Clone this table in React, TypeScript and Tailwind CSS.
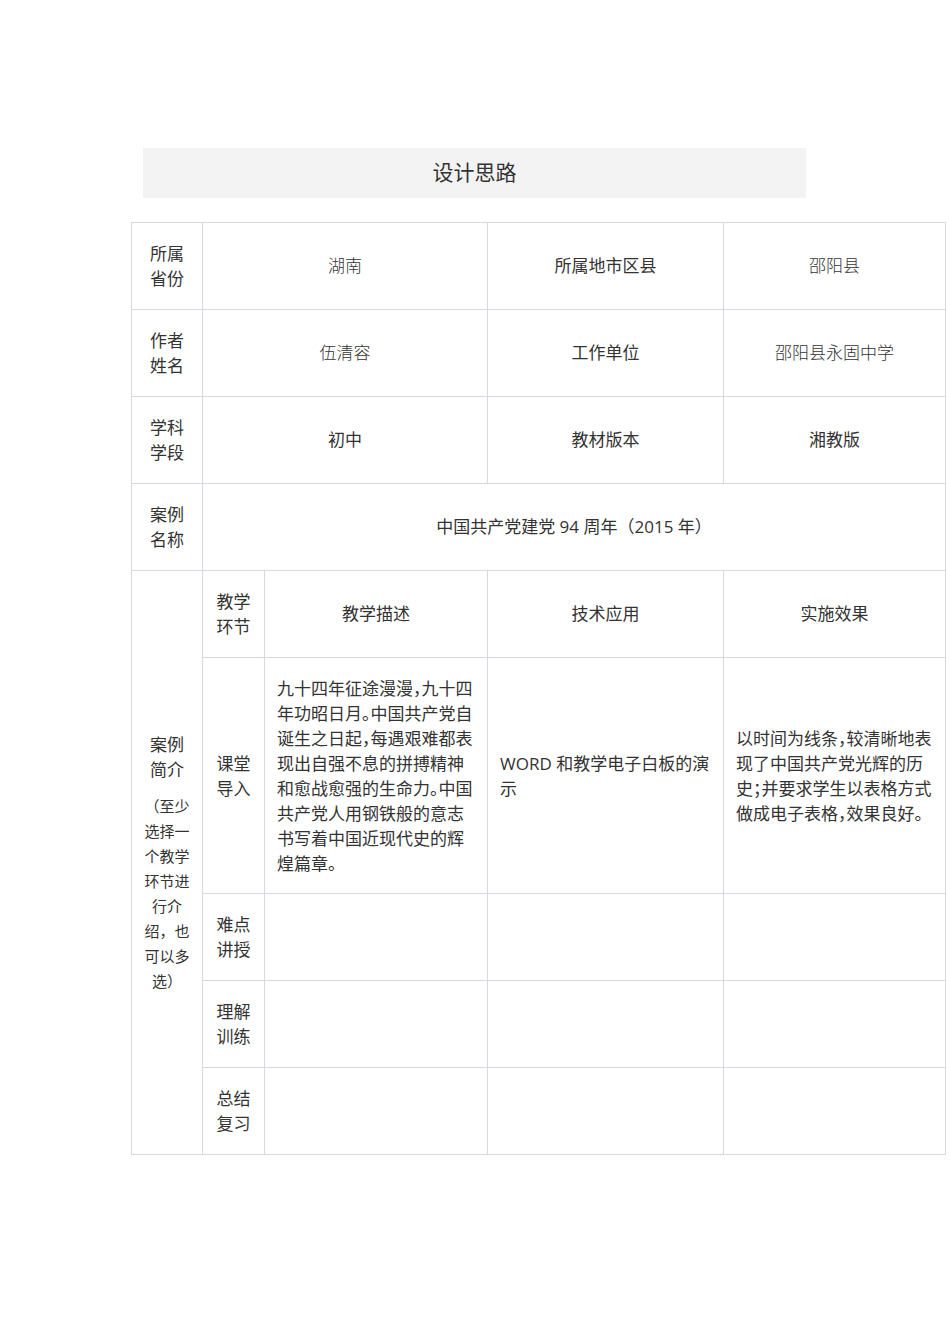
const font = { fontFamily: '"Open Sans", "Noto Sans CJK SC", sans-serif' };

const cell = 'border border-[#d6d9e5] align-middle';
const para = `${cell} px-[12px] leading-[25px] [font-feature-settings:'halt']`;

const Label = ({ lines }: { lines: string[] }) => (
    <div className="flex flex-col items-center leading-[25px]">
        {lines.map((l) => (
            <span key={l}>{l}</span>
        ))}
    </div>
);

const stages = [
    ['难点', '讲授'],
    ['理解', '训练'],
    ['总结', '复习'],
];

export default function App() {
    return (
        <div
            className="min-h-[1344px] w-[950px] bg-white pt-[148px] text-[17px] text-[#333]"
            style={font}
        >
            <div className="ml-[143px] flex h-[50px] w-[663px] items-center justify-center bg-[#f3f3f3] text-[21px] text-[#333]">
                设计思路
            </div>

            <table className="ml-[131px] mt-[24px] w-[814px] table-fixed border-collapse">
                <colgroup>
                    <col className="w-[71px]" />
                    <col className="w-[62px]" />
                    <col className="w-[223px]" />
                    <col className="w-[236px]" />
                    <col className="w-[222px]" />
                </colgroup>
                <tbody>
                    <tr className="h-[87px]">
                        <td className={cell}>
                            <Label lines={['所属', '省份']} />
                        </td>
                        <td colSpan={2} className={`${cell} text-center font-light`}>
                            湖南
                        </td>
                        <td className={`${cell} text-center`}>所属地市区县</td>
                        <td className={`${cell} text-center font-light`}>邵阳县</td>
                    </tr>
                    <tr className="h-[87px]">
                        <td className={cell}>
                            <Label lines={['作者', '姓名']} />
                        </td>
                        <td colSpan={2} className={`${cell} text-center font-light`}>
                            伍清容
                        </td>
                        <td className={`${cell} text-center`}>工作单位</td>
                        <td className={`${cell} text-center font-light`}>邵阳县永固中学</td>
                    </tr>
                    <tr className="h-[87px]">
                        <td className={cell}>
                            <Label lines={['学科', '学段']} />
                        </td>
                        <td colSpan={2} className={`${cell} text-center`}>
                            初中
                        </td>
                        <td className={`${cell} text-center`}>教材版本</td>
                        <td className={`${cell} text-center`}>湘教版</td>
                    </tr>
                    <tr className="h-[87px]">
                        <td className={cell}>
                            <Label lines={['案例', '名称']} />
                        </td>
                        <td colSpan={4} className={`${cell} text-center`}>
                            中国共产党建党 94 周年（2015 年）
                        </td>
                    </tr>
                    <tr className="h-[87px]">
                        <td rowSpan={6} className={cell}>
                            <div className="flex flex-col items-center leading-[25px]">
                                <span>案例</span>
                                <span>简介</span>
                                <div className="mt-[12px] flex flex-col items-center text-[15px] leading-[25px]">
                                    <span>（至少</span>
                                    <span>选择一</span>
                                    <span>个教学</span>
                                    <span>环节进</span>
                                    <span>行介</span>
                                    <span>绍，也</span>
                                    <span>可以多</span>
                                    <span>选）</span>
                                </div>
                            </div>
                        </td>
                        <td className={cell}>
                            <Label lines={['教学', '环节']} />
                        </td>
                        <td className={`${cell} text-center`}>教学描述</td>
                        <td className={`${cell} text-center`}>技术应用</td>
                        <td className={`${cell} text-center`}>实施效果</td>
                    </tr>
                    <tr className="h-[236px]">
                        <td className={cell}>
                            <Label lines={['课堂', '导入']} />
                        </td>
                        <td className={para}>
                            九十四年征途漫漫，九十四年功昭日月。中国共产党自诞生之日起，每遇艰难都表现出自强不息的拼搏精神和愈战愈强的生命力。中国共产党人用钢铁般的意志书写着中国近现代史的辉煌篇章。
                        </td>
                        <td className={para}>WORD 和教学电子白板的演示</td>
                        <td className={para}>
                            以时间为线条，较清晰地表现了中国共产党光辉的历史；并要求学生以表格方式做成电子表格，效果良好。
                        </td>
                    </tr>
                    {stages.map((s) => (
                        <tr key={s[0]} className="h-[87px]">
                            <td className={cell}>
                                <Label lines={s} />
                            </td>
                            <td className={cell} />
                            <td className={cell} />
                            <td className={cell} />
                        </tr>
                    ))}
                </tbody>
            </table>
        </div>
    );
}
